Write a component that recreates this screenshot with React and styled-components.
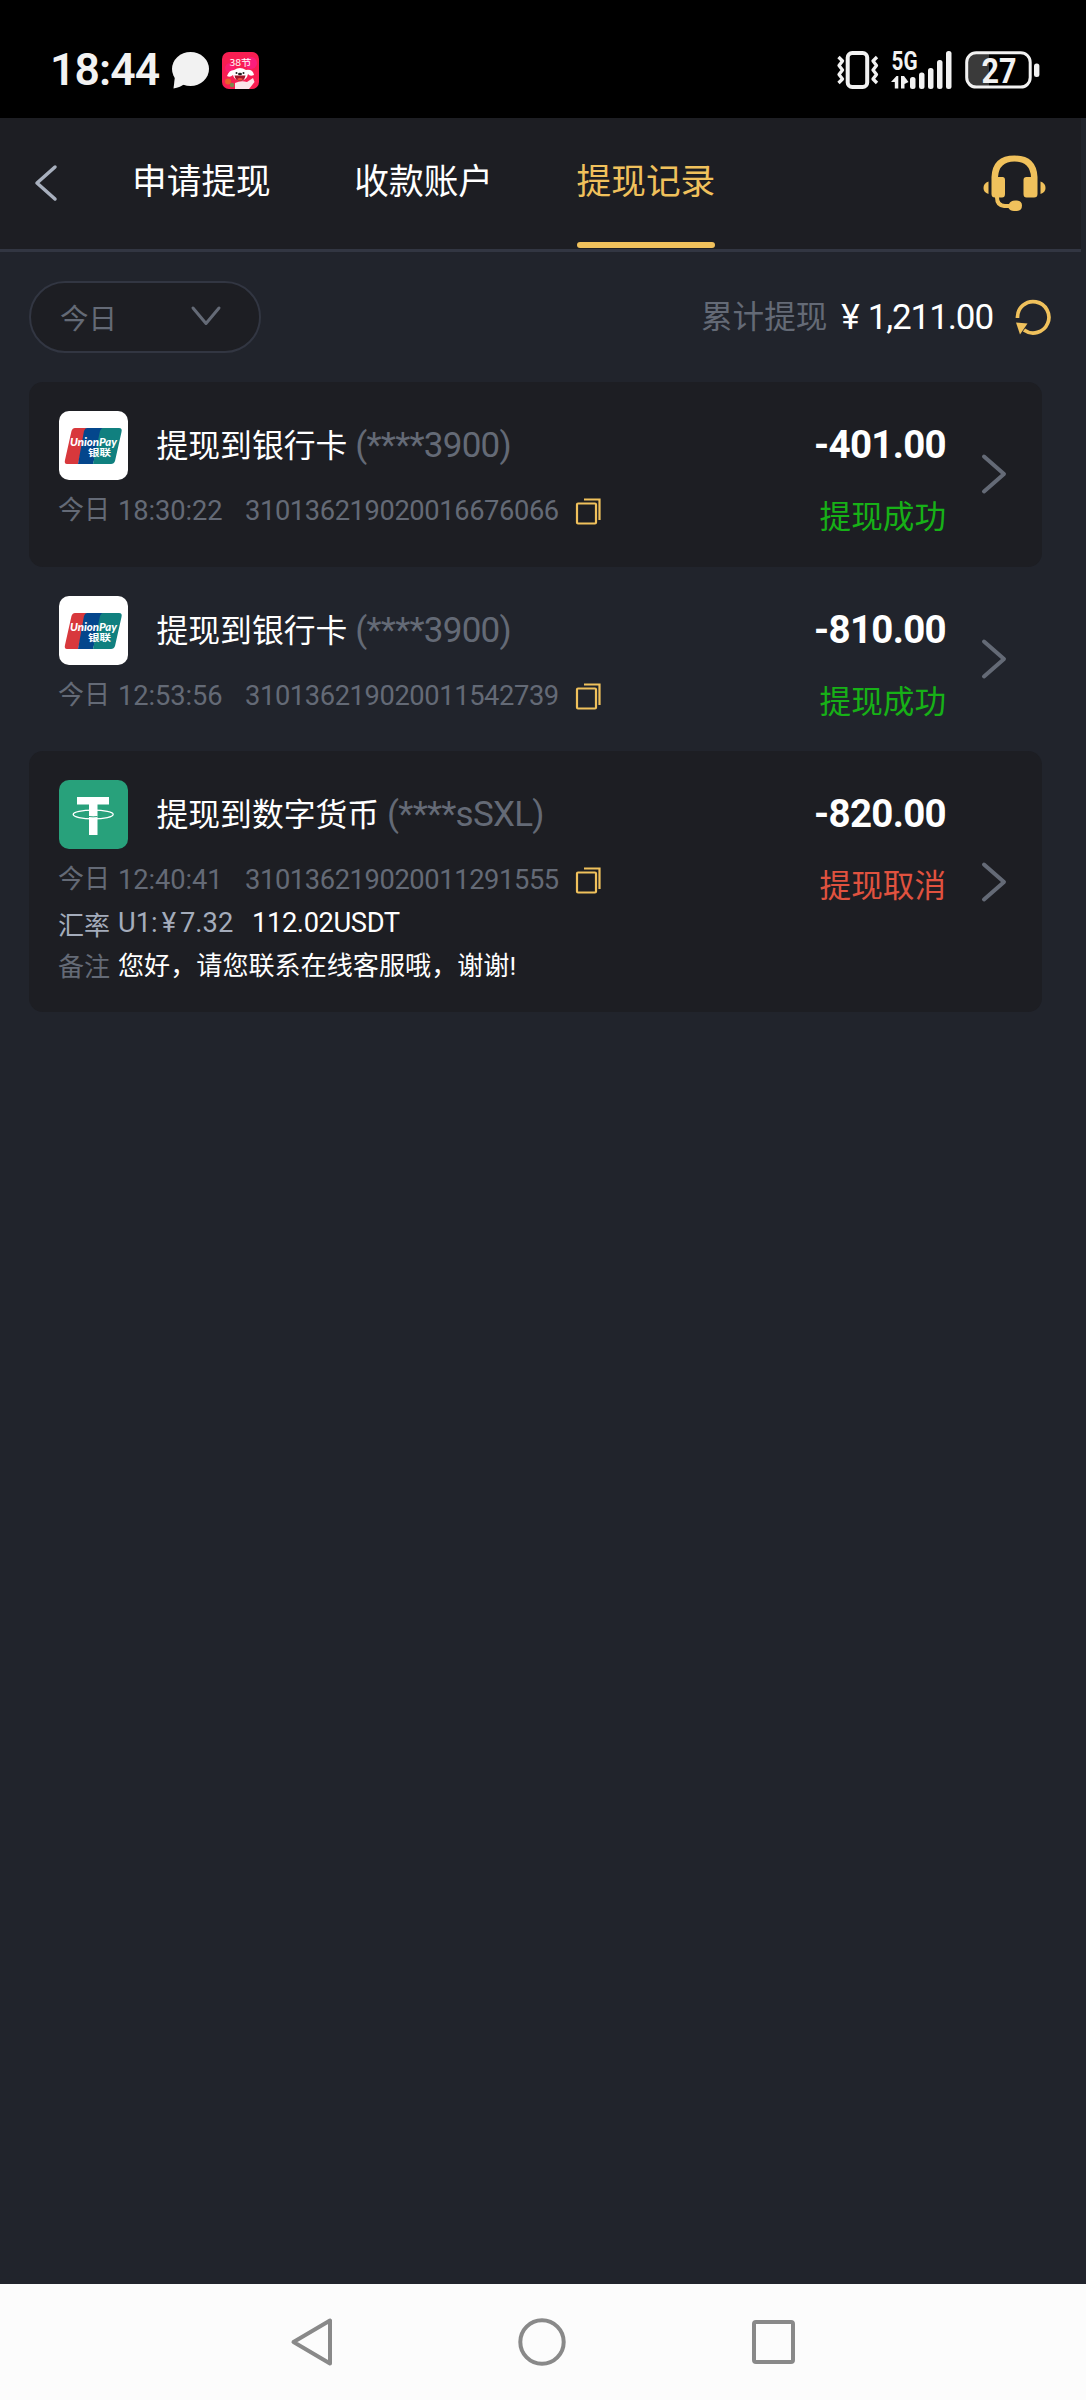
import styled, { createGlobalStyle } from 'styled-components';

const colors = {
  page: '#21242c',
  panel: '#1d1e23',
  line: '#323642',
  gold: '#f0c15c',
  muted: '#646a76',
  soft: '#a4acbb',
  white: '#ffffff',
  success: '#17b117',
  danger: '#e0523f',
};

const GlobalStyle = createGlobalStyle`
  * { box-sizing: border-box; }
  body {
    margin: 0;
    background: ${colors.page};
    font-family: Roboto, 'Noto Sans CJK SC', sans-serif;
  }
  svg { display: block; flex: none; overflow: visible; }
`;

const Screen = styled.div`
  display: flex;
  flex-direction: column;
  width: 1086px;
  height: 2400px;
  background: ${colors.page};
  overflow: hidden;
`;

const StatusBar = styled.div`
  display: flex;
  align-items: center;
  height: 118px;
  padding: 22px 46px 0 50px;
  background: #000;
  color: #f2f2f2;
`;

const Clock = styled.span`
  width: 122px;
  font-size: 44.5px;
  font-weight: 600;
  line-height: 50px;
  letter-spacing: -0.9px;
  white-space: nowrap;
`;

const StatusIcons = styled.div`
  display: flex;
  align-items: center;
  gap: ${({ $gap }) => $gap}px;
  margin-left: ${({ $right }) => ($right ? 'auto' : '0')};
`;

const Header = styled.header`
  display: flex;
  align-items: stretch;
  width: 1081px;
  height: 134px;
  padding: 0 35px 0 34px;
  background: ${colors.panel};
  border-bottom: 3px solid ${colors.line};
`;

const BackButton = styled.button`
  display: flex;
  align-items: center;
  width: 98px;
  padding: 0 0 2px;
  border: 0;
  background: none;
`;

const Tabs = styled.nav`
  display: flex;
  gap: 83.5px;
`;

const Tab = styled.span`
  display: flex;
  flex-direction: column;
  justify-content: space-between;
  padding-top: 39px;
  font-size: 34.7px;
  line-height: 50px;
  color: ${({ $active }) => ($active ? colors.gold : colors.white)};

  &::after {
    content: '';
    height: 6px;
    margin-bottom: 1px;
    border-radius: 3px;
    background: ${({ $active }) => ($active ? colors.gold : 'transparent')};
  }
`;

const Support = styled.div`
  display: flex;
  align-items: center;
  margin-left: auto;
`;

const Toolbar = styled.div`
  display: flex;
  align-items: center;
  height: 130px;
  padding: 0 35px 0 29px;
`;

const Picker = styled.div`
  display: flex;
  align-items: center;
  justify-content: space-between;
  width: 232px;
  height: 72px;
  padding: 0 37px 2px 29px;
  border: 2.5px solid ${colors.line};
  border-radius: 36px;
  background: ${colors.panel};
  color: ${colors.muted};
  font-size: 28.5px;
`;

const Total = styled.div`
  display: flex;
  align-items: center;
  margin-left: auto;
  color: ${colors.white};
  line-height: 44px;
`;

const TotalLabel = styled.span`
  padding-top: 1px;
  margin-right: 14px;
  font-size: 31.6px;
  color: ${colors.muted};
`;

const TotalValue = styled.span`
  padding-top: 2px;
  margin-right: 22px;
  font-size: 35px;
  letter-spacing: -1.1px;
`;

const Yen = styled.span`
  margin-left: ${({ $before = 0 }) => $before}px;
  margin-right: ${({ $after }) => $after}px;
`;

const List = styled.main`
  flex: 1;
  padding-left: 29px;
`;

const Card = styled.article`
  display: flex;
  align-items: center;
  width: 1013px;
  height: ${({ $tall }) => ($tall ? 261 : 184.5)}px;
  padding: 0 35px 0 30px;
  border-radius: 14px;
  background: ${({ $filled }) => ($filled ? colors.panel : 'transparent')};
`;

const Details = styled.div`
  align-self: stretch;
  width: 640px;
  padding-top: 29px;
`;

const Heading = styled.div`
  display: flex;
  align-items: center;
  gap: 28.5px;
  height: 69px;
`;

const Title = styled.h2`
  margin: 0;
  padding-top: 1px;
  font-size: 31.8px;
  font-weight: 400;
  line-height: 44px;
  color: ${colors.white};
  white-space: nowrap;
`;

const Account = styled.span`
  margin-left: 8px;
  font-size: 35px;
  letter-spacing: -0.75px;
  color: ${colors.muted};
`;

const Meta = styled.div`
  display: flex;
  align-items: center;
  height: 36px;
  margin: 13px 0 0 -1px;
  color: ${colors.muted};
  font-size: 26px;
  line-height: 34px;
  white-space: nowrap;
`;

const DateLabel = styled.span`
  padding-bottom: 2px;
`;

const Time = styled.span`
  width: 127px;
  margin-left: 8px;
  font-size: 27.3px;
  letter-spacing: -0.1px;
`;

const OrderNo = styled.span`
  width: 331px;
  font-size: 27.3px;
  letter-spacing: -0.4px;
`;

const CopyButton = styled.button`
  padding: 1px 0 0;
  border: 0;
  background: none;
`;

const Line = styled.div`
  display: flex;
  align-items: center;
  height: ${({ $height }) => $height}px;
  margin: ${({ $top }) => $top}px 0 0 -1px;
  font-size: 26px;
  color: ${({ $dim }) => ($dim ? colors.muted : colors.soft)};
  white-space: nowrap;
`;

const Rate = styled.span`
  width: 134px;
  margin-left: 8px;
  font-size: 27.3px;
`;

const Quantity = styled.span`
  font-size: 27.3px;
  letter-spacing: -0.4px;
  color: ${colors.white};
`;

const Note = styled.span`
  margin-left: 8px;
  font-size: 26.1px;
  color: ${colors.white};
`;

const Result = styled.div`
  align-self: stretch;
  display: flex;
  flex-direction: column;
  align-items: flex-end;
  width: 247px;
  padding-top: 40px;
`;

const Amount = styled.span`
  font-size: 38.5px;
  font-weight: 700;
  line-height: 46px;
  letter-spacing: -0.7px;
  color: ${colors.white};
`;

const Status = styled.span`
  margin-top: 27px;
  font-size: 31.6px;
  line-height: 46px;
  color: ${({ $failed }) => ($failed ? colors.danger : colors.success)};
`;

const Arrow = styled.div`
  margin-left: auto;
`;

const NavBar = styled.footer`
  display: flex;
  align-items: center;
  justify-content: space-between;
  height: 116px;
  padding: 0 290px;
  background: #fcfcfc;
`;

function ChatIcon() {
  return (
    <svg width='38' height='37' viewBox='0 0 38 37' fill='#f2f2f2'>
      <ellipse cx='18.5' cy='17' rx='18.5' ry='17' />
      <path d='M3 24 L1.5 36.5 Q8 35.5 14 31 Z' />
    </svg>
  );
}

function MallIcon() {
  return (
    <svg width='37' height='37' viewBox='0 0 37 37'>
      <rect width='37' height='37' rx='7' fill='#f81e52' />
      <circle cx='29' cy='11' r='6' fill='#ff1c9a' opacity='0.6' />
      <circle cx='8' cy='16' r='5' fill='#ff1c9a' opacity='0.4' />
      <text x='7.5' y='14' fontSize='9.5' fill='#fff' fontFamily='Noto Sans CJK SC' textLength='22' lengthAdjust='spacingAndGlyphs'>38节</text>
      <path d='M5 24 Q7 18 12 18 Q18 14 24 18 Q31 17 32 23 Q28 25 26 22 Q25 28 18 29 Q12 28 11 23 Q8 26 5 24Z' fill='#fff' />
      <path d='M13 37 V31 Q19 28 25 30 L31 26 L32.5 30 L27 37Z' fill='#fbe6ea' />
      <path d='M12.500 23.500 H23.500 Q22.500 29 18 29 Q13.500 29 12.500 23.500Z' fill='#a01428' />
      <path d='M15 27 Q18 25 21 27 Q18 30 15 27Z' fill='#f0503c' />
      <circle cx='14.5' cy='21' r='1' fill='#222' />
      <circle cx='21.5' cy='21' r='1' fill='#222' />
      <ellipse cx='18' cy='22' rx='2' ry='1.3' fill='#222' />
      <circle cx='6' cy='29.5' r='3' fill='#e8602c' />
      <circle cx='10' cy='33' r='2.2' fill='#7a8a4c' />
    </svg>
  );
}

function VibrateIcon() {
  return (
    <svg width='42' height='38' viewBox='0 0 42 38' fill='none' stroke='#f2f2f2' strokeLinejoin='round'>
      <rect x='10.7' y='2' width='19.5' height='34' rx='4.5' strokeWidth='4' />
      <path d='M1.500 6 L5.500 10 L2 14.500 L5.500 19 L2 23.500 L5.500 28 L1.500 32' strokeWidth='3.300' />
      <path d='M40 6 L36 10 L39.500 14.500 L36 19 L39.500 23.500 L36 28 L40 32' strokeWidth='3.300' />
    </svg>
  );
}

function SignalIcon() {
  return (
    <svg width='62' height='38' viewBox='0 0 62 38' fill='#f2f2f2'>
      <text x='0.5' y='18.5' fontSize='25' fontWeight='700' fontFamily='Roboto' textLength='26' lengthAdjust='spacingAndGlyphs'>5G</text>
      <path d='M0 31 L5.500 25 H7.300 V37.500 H3.800 V31Z' />
      <path d='M10 25 H13 L17.500 31 L13.500 33 V37.500 H10Z' />
      <rect x='19' y='26' width='5.5' height='12' rx='2.5' />
      <rect x='28' y='21.5' width='5.5' height='16.5' rx='2.5' />
      <rect x='37' y='17' width='5.5' height='21' rx='2.5' />
      <rect x='46' y='9' width='5.5' height='29' rx='2.5' />
      <rect x='55' y='0' width='5.5' height='38' rx='2.5' />
    </svg>
  );
}

function BatteryIcon() {
  return (
    <svg width='75' height='38' viewBox='0 0 75 38'>
      <path d='M12 2 H24 V36 H12 Q2 36 2 26 V12 Q2 2 12 2Z' fill='#3a3a3a' />
      <rect x='1.7' y='1.7' width='63.5' height='34.4' rx='9.5' fill='none' stroke='#f2f2f2' strokeWidth='3' />
      <rect x='69' y='12.5' width='5.4' height='13.5' rx='2.5' fill='#f2f2f2' />
      <text x='16.5' y='31.5' fontSize='35.5' fontWeight='700' fontFamily='Roboto' fill='#f2f2f2' textLength='35' lengthAdjust='spacingAndGlyphs'>27</text>
    </svg>
  );
}

function HeadsetIcon() {
  return (
    <svg width='63' height='58' viewBox='0 0 63 58' fill={colors.gold}>
      <path d='M8.500 22 Q9.500 0.500 31.500 0.500 Q53.500 0.500 54.500 22 V39 Q54.500 42.500 51 42.500 H43.500 Q40.500 42.500 40.500 39 V25 Q40.500 22 43.500 22 H48 Q47 6.500 31.500 6.500 Q16 6.500 15 22 H19.500 Q22 22 22 25 V39 Q22 42.500 19 42.500 H16 Q16 49 22 49 H26 Q27.500 45.500 32 45.500 H34 Q39 46 39 50.500 Q39 55.500 34 56 H31 Q27 56 25.500 53 H21 Q12 52 12 42.500 Q8.500 42.500 8.500 39Z' />
      <path d='M5.500 26.500 V39 Q0.500 37.500 0.500 33 Q0.500 28 5.500 26.500Z' />
      <path d='M57.500 26.500 V39 Q62.500 37.500 62.500 33 Q62.500 28 57.500 26.500Z' />
    </svg>
  );
}

function RefreshIcon() {
  return (
    <svg width='36' height='36' viewBox='0 0 36 36'>
      <path d='M2.500 19 A15.700 15.700 0 1 1 9 31' fill='none' stroke={colors.gold} strokeWidth='3.700' />
      <path d='M1 23.500 L12.500 24.500 L9.800 28.500 L5 35.500Z' fill={colors.gold} />
    </svg>
  );
}

function CopyIcon() {
  return (
    <svg width='25' height='27' viewBox='0 0 25 27' fill='none' stroke={colors.gold} strokeWidth='2.2'>
      <rect x='1' y='5.500' width='19' height='20' rx='1' />
      <path d='M8 1.500 H23.500 V22' />
    </svg>
  );
}

function Chevron({ width, height, points, color, stroke = 4 }) {
  return (
    <svg width={width} height={height} viewBox={`0 0 ${width} ${height}`} fill='none'>
      <polyline points={points} stroke={color} strokeWidth={stroke} strokeLinecap='round' strokeLinejoin='round' />
    </svg>
  );
}

function UnionPayLogo() {
  return (
    <svg width='69' height='69' viewBox='0 0 69 69'>
      <rect width='69' height='69' rx='10' fill='#fff' />
      <path d='M16 17 H28 L19 53 H8 Q5 53 6 49 L12.500 20 Q13.500 17 16 17Z' fill='#d8383c' />
      <path d='M28 17 H44 L34 53 H19 L25 20 Q26 17 28 17Z' fill='#04468c' />
      <path d='M44 17 H60 Q63.500 17 62.500 21 L56 50 Q55 53 52 53 H34 L41 20 Q42 17 44 17Z' fill='#10807f' />
      <text x='11' y='34.5' fontSize='11.5' fontWeight='900' fontStyle='italic' fontFamily='Lato' fill='#fff' textLength='47' lengthAdjust='spacingAndGlyphs'>UnionPay</text>
      <text x='29' y='44.5' fontSize='9.5' fontWeight='700' fontFamily='Noto Sans CJK SC' fill='#fff' textLength='23' lengthAdjust='spacingAndGlyphs'>银联</text>
    </svg>
  );
}

function TetherLogo() {
  return (
    <svg width='69' height='69' viewBox='0 0 69 69'>
      <rect width='69' height='69' rx='10' fill='#28a17b' />
      <path d='M18 17 H50 V24.500 H38.500 V55 H30 V24.500 H18Z' fill='#fff' />
      <ellipse cx='34.200' cy='34.500' rx='20' ry='4.300' fill='none' stroke='#fff' strokeWidth='1.300' />
      <path d='M30 36.500 Q34 37.200 38.500 36.500' fill='none' stroke='#28a17b' strokeWidth='1' />
    </svg>
  );
}

const records = [
  {
    title: '提现到银行卡',
    account: '(****3900)',
    time: '18:30:22',
    order: '310136219020016676066',
    amount: '-401.00',
    status: '提现成功',
  },
  {
    title: '提现到银行卡',
    account: '(****3900)',
    time: '12:53:56',
    order: '310136219020011542739',
    amount: '-810.00',
    status: '提现成功',
  },
  {
    title: '提现到数字货币',
    account: '(****sSXL)',
    time: '12:40:41',
    order: '310136219020011291555',
    amount: '-820.00',
    status: '提现取消',
    failed: true,
    crypto: { rate: '7.32', total: '112.02USDT', note: '您好，请您联系在线客服哦，谢谢!' },
  },
];

function Record({ record, filled }) {
  const { crypto } = record;

  return (
    <Card $filled={filled} $tall={Boolean(crypto)}>
      <Details>
        <Heading>
          {crypto ? <TetherLogo /> : <UnionPayLogo />}
          <Title>
            {record.title}
            <Account>{record.account}</Account>
          </Title>
        </Heading>
        <Meta>
          <DateLabel>今日</DateLabel>
          <Time>{record.time}</Time>
          <OrderNo>{record.order}</OrderNo>
          <CopyButton>
            <CopyIcon />
          </CopyButton>
        </Meta>
        {crypto && (
          <>
            <Line $top={5} $height={40}>
              汇率
              <Rate>
                U1:<Yen $before={4} $after={4}>¥</Yen>
                {crypto.rate}
              </Rate>
              <Quantity>{crypto.total}</Quantity>
            </Line>
            <Line $dim $top={0} $height={42}>
              备注
              <Note>{crypto.note}</Note>
            </Line>
          </>
        )}
      </Details>
      <Result>
        <Amount>{record.amount}</Amount>
        <Status $failed={record.failed}>{record.status}</Status>
      </Result>
      <Arrow>
        <Chevron width={26} height={40} points='3,2.5 23,20 3,37.5' color={colors.muted} />
      </Arrow>
    </Card>
  );
}

function App() {
  return (
    <Screen>
      <GlobalStyle />
      <StatusBar>
        <Clock>18:44</Clock>
        <StatusIcons $gap={12}>
          <ChatIcon />
          <MallIcon />
        </StatusIcons>
        <StatusIcons $right $gap={12}>
          <VibrateIcon />
          <SignalIcon />
          <BatteryIcon />
        </StatusIcons>
      </StatusBar>
      <Header>
        <BackButton>
          <Chevron width={24} height={38} points='21,3 3,19 21,35' color='#a8b0be' stroke={3.5} />
        </BackButton>
        <Tabs>
          <Tab>申请提现</Tab>
          <Tab>收款账户</Tab>
          <Tab $active>提现记录</Tab>
        </Tabs>
        <Support>
          <HeadsetIcon />
        </Support>
      </Header>
      <Toolbar>
        <Picker>
          今日
          <Chevron width={32} height={22} points='3,3 16,18.500 29,3' color={colors.muted} stroke={3} />
        </Picker>
        <Total>
          <TotalLabel>累计提现</TotalLabel>
          <TotalValue>
            <Yen $after={9}>¥</Yen>1,211.00
          </TotalValue>
          <RefreshIcon />
        </Total>
      </Toolbar>
      <List>
        {records.map((record, index) => (
          <Record key={record.order} record={record} filled={index % 2 === 0} />
        ))}
      </List>
      <NavBar>
        <svg width='43' height='50' viewBox='0 0 43 50' fill='none' stroke='#898989' strokeWidth='4' strokeLinejoin='round'>
          <path d='M40 3.500 V46.500 L3.500 25Z' />
        </svg>
        <svg width='50' height='50' viewBox='0 0 50 50' fill='none' stroke='#898989' strokeWidth='4'>
          <circle cx='25' cy='25' r='21.700' />
        </svg>
        <svg width='45' height='46' viewBox='0 0 45 46' fill='none' stroke='#898989' strokeWidth='4'>
          <rect x='3' y='3' width='39' height='40' rx='2' />
        </svg>
      </NavBar>
    </Screen>
  );
}

export default App;
